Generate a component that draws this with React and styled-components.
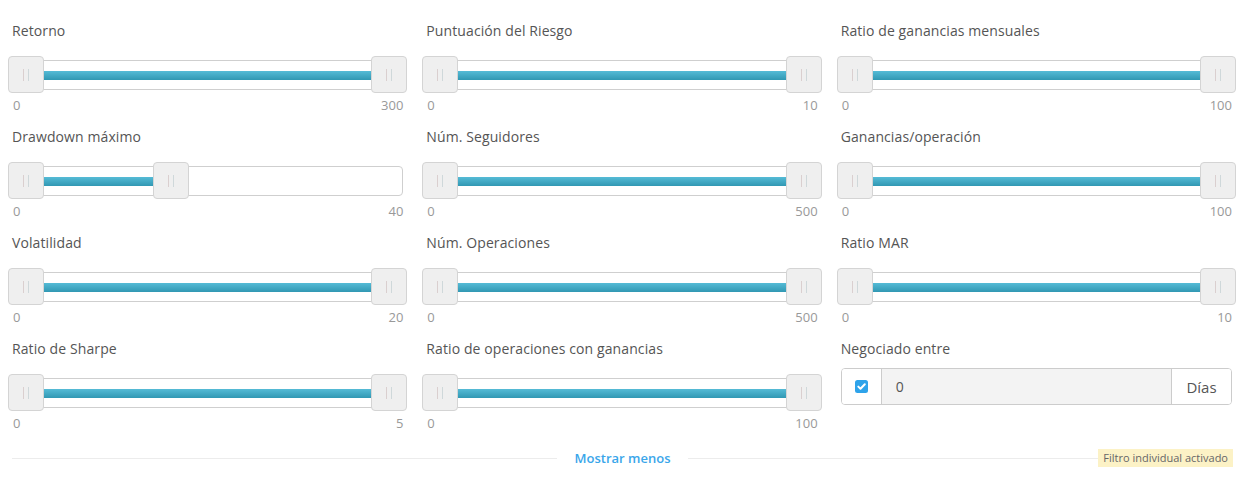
import React from 'react';
import styled, { createGlobalStyle } from 'styled-components';

const HANDLE = 36;

const filters = [
  { label: 'Retorno', max: 300, from: 0, to: 300 },
  { label: 'Puntuación del Riesgo', max: 10, from: 0, to: 10 },
  { label: 'Ratio de ganancias mensuales', max: 100, from: 0, to: 100 },
  { label: 'Drawdown máximo', max: 40, from: 0, to: 16 },
  { label: 'Núm. Seguidores', max: 500, from: 0, to: 500 },
  { label: 'Ganancias/operación', max: 100, from: 0, to: 100 },
  { label: 'Volatilidad', max: 20, from: 0, to: 20 },
  { label: 'Núm. Operaciones', max: 500, from: 0, to: 500 },
  { label: 'Ratio MAR', max: 10, from: 0, to: 10 },
  { label: 'Ratio de Sharpe', max: 5, from: 0, to: 5 },
  { label: 'Ratio de operaciones con ganancias', max: 100, from: 0, to: 100 },
];

const RangeSlider = ({ max, from, to }) => {
  const a = from / max;
  const b = to / max;
  const left = `calc((100% - ${HANDLE}px) * ${a})`;
  const right = `calc((100% - ${HANDLE}px) * ${b})`;
  return (
    <SliderWrap>
      <Track />
      <Fill style={{ left: `calc(${left} + ${HANDLE}px)`, width: `calc(${right} - ${left} - ${HANDLE}px)` }} />
      <Handle style={{ left }}>
        <Grip />
      </Handle>
      <Handle style={{ left: right }}>
        <Grip />
      </Handle>
    </SliderWrap>
  );
};

const FilterCell = ({ label, max, from, to }) => (
  <Cell>
    <Label>{label}</Label>
    <RangeSlider max={max} from={from} to={to} />
    <Limits>
      <span>0</span>
      <span>{max}</span>
    </Limits>
  </Cell>
);

const CheckIcon = () => (
  <svg width="13" height="13" viewBox="0 0 13 13">
    <rect width="13" height="13" rx="2.5" fill="#2ea3ea" />
    <path d="M3.3 6.6 L5.5 8.7 L9.8 4.3" stroke="#fff" strokeWidth="2" fill="none" strokeLinecap="round" strokeLinejoin="round" />
  </svg>
);

const App = () => (
  <>
    <GlobalStyle />
    <Page>
      <Grid>
        {filters.map((f) => (
          <FilterCell key={f.label} {...f} />
        ))}
        <Cell>
          <Label>Negociado entre</Label>
          <InputGroup>
            <CheckAddon>
              <CheckIcon />
            </CheckAddon>
            <NumberField>0</NumberField>
            <UnitAddon>Días</UnitAddon>
          </InputGroup>
        </Cell>
      </Grid>
      <Footer>
        <ToggleLink>Mostrar menos</ToggleLink>
        <Badge>Filtro individual activado</Badge>
      </Footer>
    </Page>
  </>
);

export default App;

// style
const GlobalStyle = createGlobalStyle`
  body {
    margin: 8px;
    background: #fff;
    font-family: 'Open Sans', 'Liberation Sans', sans-serif;
  }
`;

const Page = styled.div`
  padding-top: 13px;
`;

const Grid = styled.div`
  display: grid;
  grid-template-columns: repeat(3, 1fr);
  column-gap: 15px;
`;

const Cell = styled.div`
  height: 106px;
  display: flex;
  flex-direction: column;
`;

const Label = styled.div`
  font-size: 14px;
  line-height: 20px;
  letter-spacing: 0.1px;
  color: #555;
  padding-left: 4px;
  margin-bottom: 15px;
`;

const SliderWrap = styled.div`
  position: relative;
  height: 37px;
`;

const Track = styled.div`
  position: absolute;
  top: 4px;
  left: 0;
  right: 4px;
  height: 30px;
  box-sizing: border-box;
  border: 1px solid #cfcfcf;
  border-radius: 4px;
  background: #fff;
`;

const Fill = styled.div`
  position: absolute;
  top: 15px;
  height: 9px;
  background: linear-gradient(to bottom, #55bbd6, #3198b3);
`;

const Handle = styled.div`
  position: absolute;
  top: 0;
  width: ${HANDLE}px;
  height: 37px;
  box-sizing: border-box;
  border: 1px solid #d4d4d4;
  border-radius: 4px;
  background: #efefef;
  display: flex;
  align-items: center;
  justify-content: center;
`;

const Grip = styled.div`
  width: 6px;
  height: 12px;
  box-sizing: border-box;
  border-left: 1px solid #dacfcf;
  border-right: 1px solid #cfd8da;
`;

const Limits = styled.div`
  display: flex;
  justify-content: space-between;
  margin-top: 4px;
  padding: 0 4px 0 5px;
  font-size: 13px;
  line-height: 16px;
  color: #999;
`;

const InputGroup = styled.div`
  display: flex;
  height: 37px;
  margin: -6px 4px 0;
  box-sizing: border-box;
  border: 1px solid #ccc;
  border-radius: 4px;
  overflow: hidden;
`;

const CheckAddon = styled.div`
  width: 39px;
  display: flex;
  align-items: center;
  justify-content: center;
  border-right: 1px solid #ccc;
  background: #fff;
`;

const NumberField = styled.div`
  flex: 1;
  display: flex;
  align-items: center;
  padding-left: 14px;
  background: #f3f3f3;
  font-size: 14px;
  color: #555;
`;

const UnitAddon = styled.div`
  width: 59px;
  display: flex;
  align-items: center;
  justify-content: center;
  border-left: 1px solid #ccc;
  background: #fff;
  font-size: 15px;
  color: #555;
`;

const Footer = styled.div`
  position: relative;
  margin: 4px 3px 0 4px;
  height: 18px;
  display: flex;
  align-items: center;
  justify-content: center;

  &::before {
    content: '';
    position: absolute;
    left: 0;
    right: 0;
    top: 9px;
    border-top: 1px solid #ececec;
  }
`;

const ToggleLink = styled.a`
  position: relative;
  padding: 0 18px;
  background: #fff;
  font-size: 13px;
  font-weight: 600;
  color: #3aa6ea;
  cursor: pointer;
`;

const Badge = styled.span`
  position: absolute;
  right: 0;
  top: 0;
  height: 18px;
  line-height: 18px;
  padding: 0 5px;
  background: #fcf2c6;
  font-size: 11px;
  color: #666;
`;
